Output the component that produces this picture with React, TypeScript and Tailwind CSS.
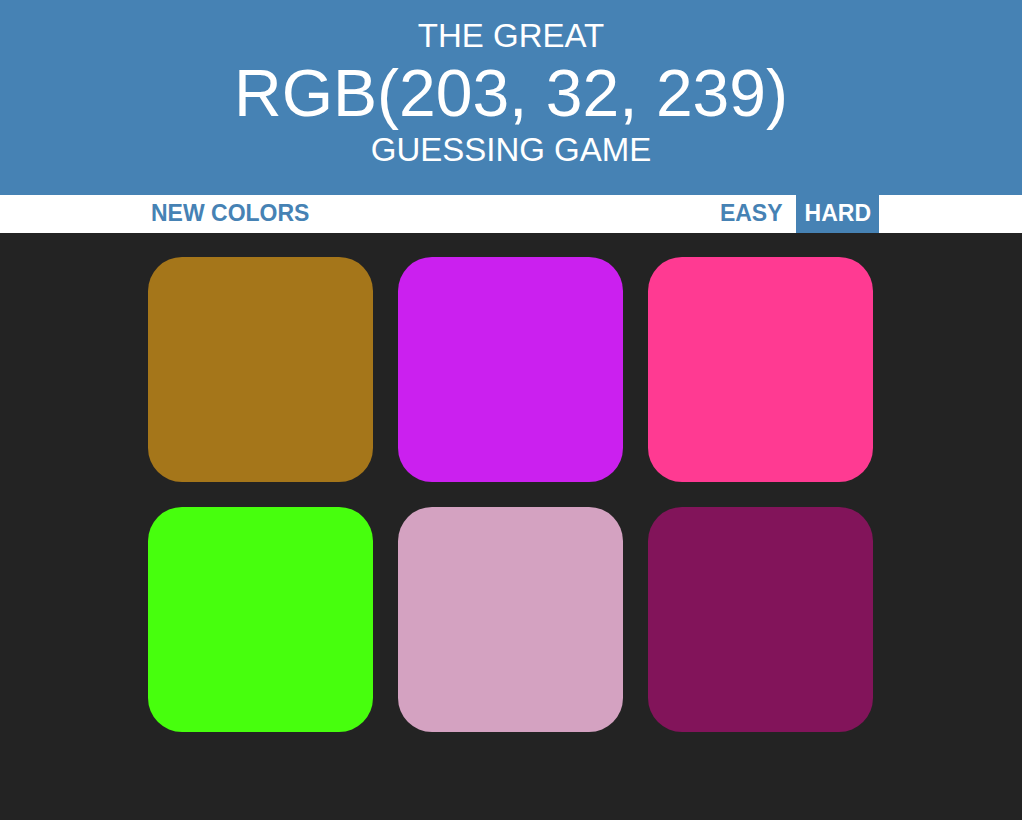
import React from "react";

const squares = [
  "#a5761a",
  "#cb20ef",
  "#ff3a92",
  "#47ff0d",
  "#d4a2c1",
  "#82145a",
];

const App = () => {
  return (
    <div className="min-h-screen bg-[#232323] font-['Liberation_Sans',Arial,sans-serif]">
      <div className="h-[195px] bg-[#4682b4] pt-[18px] text-center font-normal uppercase text-white">
        <div className="text-[33px] leading-[36px]">The Great</div>
        <div className="text-[66px] leading-[79px]">RGB(203, 32, 239)</div>
        <div className="text-[33px] leading-[34px]">Guessing Game</div>
      </div>

      <div className="h-[38px] bg-white">
        <div className="mx-auto flex h-full w-[736px] justify-between">
          <button className="h-full px-2 pb-[2px] text-[23px] font-bold uppercase leading-[36px] text-[#4682b4]">
            New Colors
          </button>
          <div className="flex h-full">
            <button className="mr-[5px] h-full px-2 pb-[2px] text-[23px] font-bold uppercase leading-[36px] text-[#4682b4]">
              Easy
            </button>
            <button className="h-full bg-[#4682b4] pb-[2px] pl-[9px] pr-2 text-[23px] font-bold uppercase leading-[36px] text-white">
              Hard
            </button>
          </div>
        </div>
      </div>

      <div className="mx-auto w-[726px] pt-[24px]">
        <div className="grid grid-cols-[225px_225px_225px] gap-[25px]">
          {squares.map((c) => (
            <div
              key={c}
              className="h-[225px] w-[225px] rounded-[34px]"
              style={{ backgroundColor: c }}
            />
          ))}
        </div>
      </div>
    </div>
  );
};

export default App;
